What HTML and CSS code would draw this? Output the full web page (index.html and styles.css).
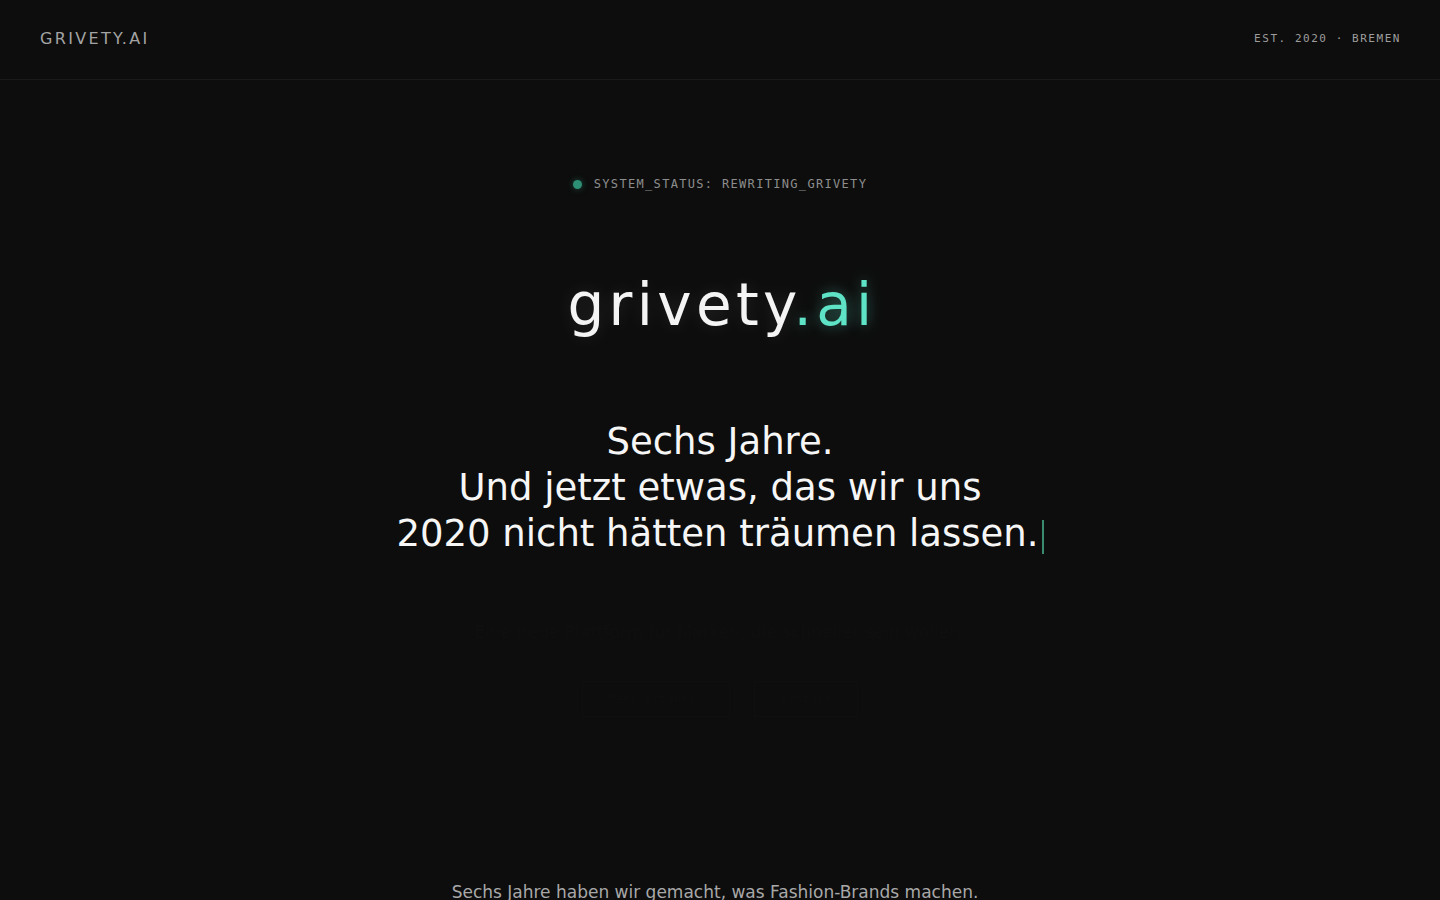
FILE: index.html
```html
<!DOCTYPE html>
<html lang="de">
<head>
<meta charset="utf-8">
<title>grivety.ai</title>
<link rel="stylesheet" href="styles.css">
</head>
<body>
<header class="topbar">
  <div class="brand">GRIVETY.AI</div>
  <div class="meta">EST. 2020 · BREMEN</div>
</header>
<main class="hero">
  <div class="status"><span class="dot"></span><span>SYSTEM_STATUS: REWRITING_GRIVETY</span></div>
  <h1 class="logo">grivety<span class="accent">.ai</span></h1>
  <h2 class="headline">Sechs Jahre.<br>Und jetzt etwas, das wir uns<br>2020 nicht hätten träumen lassen.<span class="cursor"></span></h2>
  <p class="ghost-text">Eine neue Plattform für Marken, die schneller sein wollen.</p>
  <div class="ghost-actions">
    <span class="ghost-btn">Mehr erfahren</span>
    <span class="ghost-btn">Kontakt</span>
  </div>
</main>
<section class="story">
  <p>Sechs Jahre haben wir gemacht, was Fashion-Brands machen.</p>
</section>
</body>
</html>
```

FILE: styles.css
```css
html, body {
  margin: 0;
  padding: 0;
  background: #0d0d0d;
  color: #eaeaea;
  font-family: "DejaVu Sans", "Liberation Sans", sans-serif;
  overflow: hidden;
}

.topbar {
  height: 79px;
  padding: 0 40px;
  display: flex;
  align-items: center;
  justify-content: space-between;
  border-bottom: 1px solid #1a1a1a;
}

.brand {
  font-size: 16px;
  letter-spacing: 0.145em;
  color: #a3a3a3;
  margin-top: -3px;
}

.meta {
  font-family: "DejaVu Sans Mono", monospace;
  font-size: 11px;
  letter-spacing: 0.14em;
  color: #9d9d9d;
  margin-right: -1px;
  margin-top: -3px;
}

.hero {
  display: flex;
  flex-direction: column;
  align-items: center;
  padding-top: 95px;
}

.status {
  display: flex;
  align-items: center;
  gap: 12px;
  font-family: "DejaVu Sans Mono", monospace;
  font-size: 12px;
  line-height: 18px;
  letter-spacing: 0.11em;
  color: #8d8d8d;
}

.dot {
  width: 9px;
  height: 9px;
  border-radius: 50%;
  background: #2d8f74;
  box-shadow: 0 0 6px rgba(45, 143, 116, 0.5);
}

.logo {
  margin: 76px 0 0;
  font-size: 58px;
  line-height: 72px;
  font-weight: 400;
  letter-spacing: 0.075em;
  color: #f4f4f4;
  text-shadow: 0 0 18px rgba(255, 255, 255, 0.12);
  margin-right: -4px;
}

.accent {
  color: #5fe3c6;
  text-shadow: 0 0 14px rgba(95, 227, 198, 0.45);
}

.headline {
  margin: 78px 0 0;
  font-size: 37px;
  line-height: 46px;
  font-weight: 400;
  text-align: center;
  color: #f6f6f6;
}

.cursor {
  display: inline-block;
  width: 2px;
  height: 34px;
  background: #3a8a72;
  margin-left: 3px;
  vertical-align: -8px;
}

.ghost-text {
  margin: 62px 0 0;
  font-size: 17px;
  line-height: 26px;
  color: #0f0f0f;
}

.ghost-actions {
  margin-top: 36px;
  display: flex;
  gap: 24px;
}

.ghost-btn {
  padding: 10px 26px;
  font-family: "DejaVu Sans Mono", monospace;
  font-size: 12px;
  color: #0f0f0f;
  border: 1px solid #0f0f0f;
}

.story {
  display: flex;
  justify-content: center;
  padding-top: 162px;
  padding-right: 10px;
}

.story p {
  margin: 0;
  font-size: 17px;
  line-height: 26px;
  color: #a8a8a8;
}
```
